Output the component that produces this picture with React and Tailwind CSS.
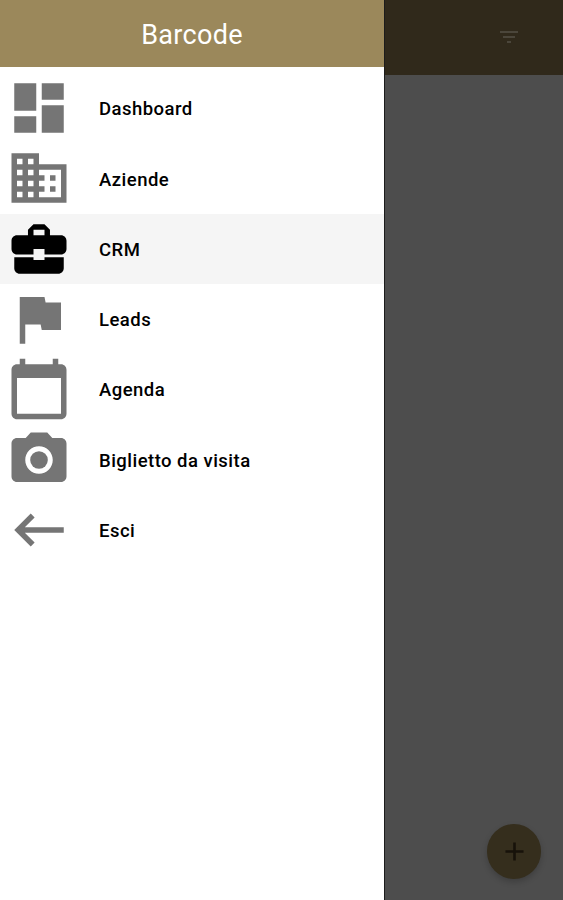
import React from 'react';
import {
  MdAdd,
  MdBusiness,
  MdBusinessCenter,
  MdCalendarToday,
  MdDashboard,
  MdFilterList,
  MdFlag,
  MdKeyboardBackspace,
  MdPhotoCamera
} from 'react-icons/md';

const menuItems = [
  { icon: MdDashboard, label: "Dashboard" },
  { icon: MdBusiness, label: "Aziende" },
  { icon: MdBusinessCenter, label: "CRM", active: true },
  { icon: MdFlag, label: "Leads" },
  { icon: MdCalendarToday, label: "Agenda" },
  { icon: MdPhotoCamera, label: "Biglietto da visita" },
  { icon: MdKeyboardBackspace, label: "Esci" }
];

const App = () => {
  return (
    <div className="flex w-[563px] h-[900px] overflow-hidden bg-[#4d4d4d] font-[Roboto,sans-serif]">
      {/* Drawer */}
      <div className="w-[384px] shrink-0 flex flex-col bg-white">
        <header className="h-[67px] shrink-0 flex items-center justify-center bg-[#9b885b] pt-[3px]">
          <h1 className="text-[27px] leading-8 tracking-[0.3px] text-white">Barcode</h1>
        </header>
        <nav className="pt-[6px]">
          {menuItems.map(({ icon: Icon, label, active }) => (
            <a
              key={label}
              className={`flex items-center h-[70.3px] pl-[6px] ${active ? 'bg-[#f5f5f5]' : ''}`}
            >
              <Icon className={`w-[66px] h-[66px] shrink-0 ${active ? 'text-black' : 'text-[#757575]'}`} />
              <span className="ml-[27px] pt-[4px] text-[18.5px] font-medium tracking-[0.47px] text-black whitespace-nowrap">
                {label}
              </span>
            </a>
          ))}
        </nav>
      </div>

      {/* Dimmed page behind the drawer */}
      <div className="flex-1 flex flex-col justify-between border-l border-[#1c1c1c]">
        <div className="h-[75px] flex items-center justify-end bg-[#30291b] pr-[42px] pb-[2px]">
          <MdFilterList className="w-6 h-6 text-[#4b463b]" />
        </div>
        <div className="flex justify-end pr-[22px] pb-[21px]">
          <button className="w-[54px] h-[55px] rounded-full bg-[#352e1d] flex items-center justify-center shadow-[0_3px_6px_rgba(0,0,0,0.2)]">
            <MdAdd className="w-[31px] h-[31px] text-[#17120a]" />
          </button>
        </div>
      </div>
    </div>
  );
};

export default App;
